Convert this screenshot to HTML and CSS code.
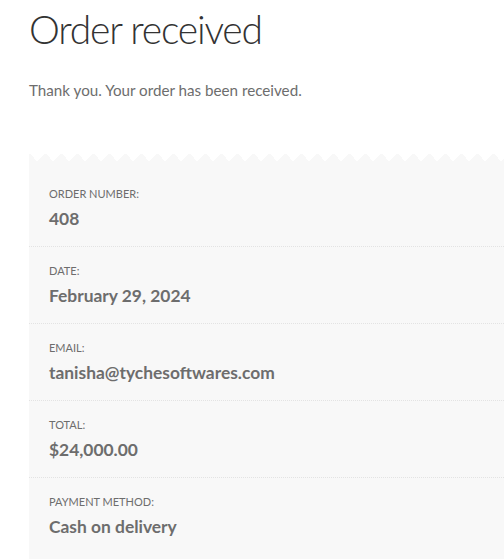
FILE: index.html
```html
<!DOCTYPE html>
<html lang="en">
<head>
<meta charset="UTF-8">
<meta name="viewport" content="width=device-width, initial-scale=1.0">
<title>Order received</title>
<link rel="stylesheet" href="styles.css">
</head>
<body>
  <div id="page">
    <h1 class="entry-title">Order received</h1>
    <p class="thankyou">Thank you. Your order has been received.</p>
    <ul class="order-details">
      <li>Order number:<strong>408</strong></li>
      <li>Date:<strong>February 29, 2024</strong></li>
      <li>Email:<strong>tanisha@tychesoftwares.com</strong></li>
      <li>Total:<strong>$24,000.00</strong></li>
      <li>Payment method:<strong>Cash on delivery</strong></li>
    </ul>
  </div>
</body>
</html>
```
FILE: styles.css
```css
html, body {
  overflow: hidden;
}
body {
  font-family: Lato, "Open Sans", sans-serif;
  background-color: #fff;
  color: #6d6d6d;
  margin: 0;
  padding: 0;
}
#page {
  padding: 6px 0 0 29px;
}
h1.entry-title {
  font-size: 39px;
  font-weight: 300;
  letter-spacing: -1.2px;
  line-height: 1.2;
  color: #333;
  margin: 0;
}
.thankyou {
  font-size: 15.2px;
  line-height: 24px;
  margin: 25px 0 0;
}
.order-details {
  list-style: none;
  position: relative;
  background-color: #f8f8f8;
  margin: 59px 0 0;
  padding: 0;
}
/* zigzag edge on top of the box */
.order-details::before {
  content: "";
  position: absolute;
  top: -8px;
  left: 0;
  right: 0;
  height: 8px;
  background-image: conic-gradient(from 135deg at 50% 0, #f8f8f8 90deg, transparent 0deg);
  background-size: 16px 8px;
  background-position: 8px 0;
  background-repeat: repeat-x;
}
.order-details li {
  padding: 13px 20px;
  font-size: 11px;
  line-height: 22px;
  text-transform: uppercase;
  border-bottom: 1px dotted #e3e3e3;
}
.order-details li:first-child {
  padding-top: 22px;
}
.order-details li:last-child {
  padding-bottom: 22px;
  border-bottom: none;
}
.order-details li strong {
  display: block;
  font-size: 17.4px;
  line-height: 28px;
  font-weight: 700;
  text-transform: none;
}
```
